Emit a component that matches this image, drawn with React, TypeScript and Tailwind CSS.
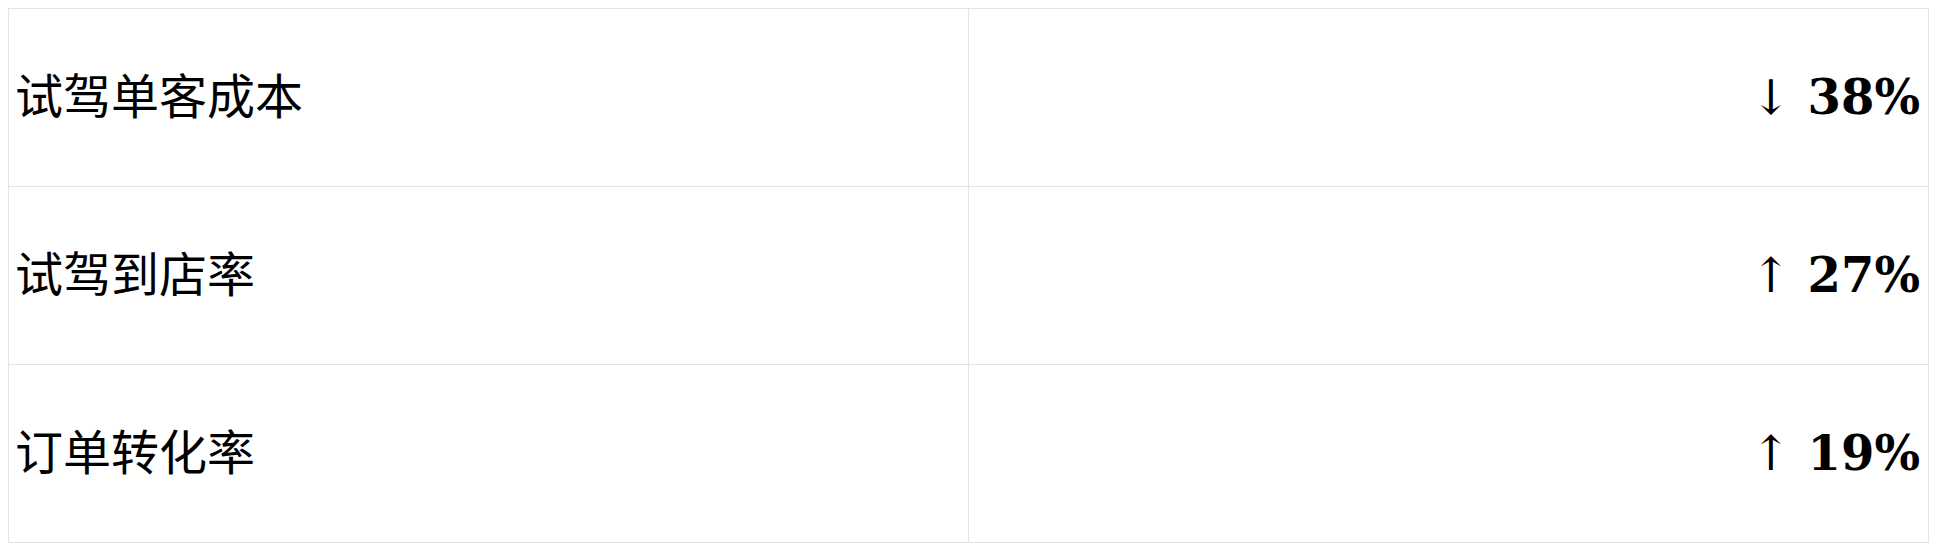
import React from 'react';

const rows = [
  { label: '试驾单客成本', arrow: '↓', value: '38%' },
  { label: '试驾到店率', arrow: '↑', value: '27%' },
  { label: '订单转化率', arrow: '↑', value: '19%' },
];

export default function App() {
  return (
    <div className="p-2 bg-white" style={{ fontFamily: '"DejaVu Serif", "Noto Sans CJK SC", serif' }}>
      <table className="w-[1921px] border-collapse table-fixed">
        <tbody>
          {rows.map((row) => (
            <tr key={row.label}>
              <td className="h-[178px] border border-[#e3e3ea] pl-1.5 pr-2 pb-0.5 text-[48px] text-black align-middle">
                {row.label}
              </td>
              <td className="h-[178px] border border-[#e3e3ea] px-2 pb-0.5 text-[48px] text-black font-bold text-right align-middle">
                <span className="font-normal">{row.arrow}</span> {row.value}
              </td>
            </tr>
          ))}
        </tbody>
      </table>
    </div>
  );
}
